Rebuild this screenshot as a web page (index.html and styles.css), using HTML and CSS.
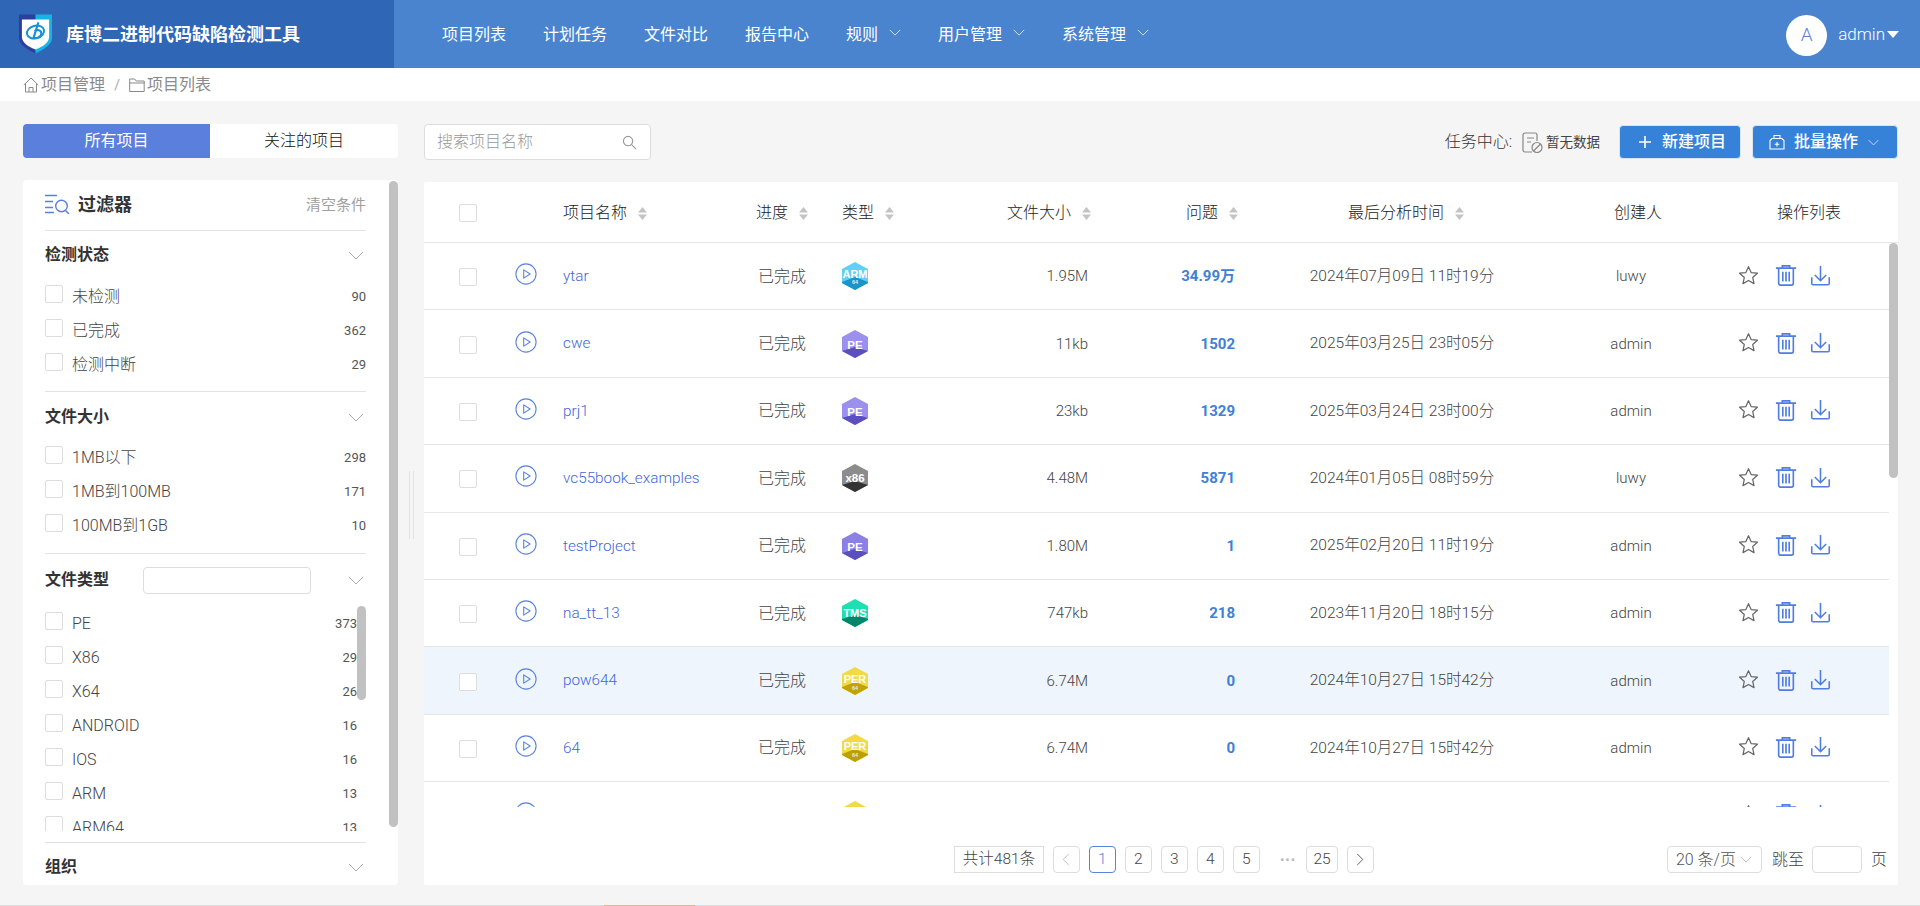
FILE: index.html
```html
<!DOCTYPE html>
<html lang="zh-CN">
<head>
<meta charset="utf-8">
<title>库博二进制代码缺陷检测工具</title>
<link rel="stylesheet" href="styles.css">
</head>
<body>
<svg class="defs" width="0" height="0" aria-hidden="true">
  <symbol id="i-chev" viewBox="0 0 16 9"><path d="M1 1l7 7 7-7" fill="none" stroke="currentColor" stroke-width="1"/></symbol>
  <symbol id="i-play" viewBox="0 0 24 24"><circle cx="12" cy="12" r="11" fill="none" stroke="currentColor" stroke-width="1.2"/><path d="M9.500 7.500v9l7-4.500z" fill="none" stroke="currentColor" stroke-width="1.2" stroke-linejoin="round"/></symbol>
  <symbol id="i-star" viewBox="0 0 24 24"><path d="M12 2l3 6.600 7.200.8-5.400 4.800 1.500 7.100L12 17.700 5.700 21.300l1.500-7.100L1.800 9.400 9 8.600z" fill="none" stroke="currentColor" stroke-width="1.400" stroke-linejoin="round"/></symbol>
  <symbol id="i-trash" viewBox="0 0 24 24"><path d="M1 4.500h22M8 4.500V2h8v2.500M4 4.500V21a2 2 0 0 0 2 2h12a2 2 0 0 0 2-2V4.500M8.500 8.500v10.500M12 8.500v10.500M15.500 8.500v10.500" fill="none" stroke="currentColor" stroke-width="1.800"/></symbol>
  <symbol id="i-down" viewBox="0 0 24 24"><path d="M12 1v17M5.500 11.500l6.500 6.500 6.500-6.500M2 14v7a1.500 1.500 0 0 0 1.500 1.500h17A1.500 1.500 0 0 0 22 21v-7" fill="none" stroke="currentColor" stroke-width="1.800"/></symbol>
  <symbol id="i-sort" viewBox="0 0 9 13"><path d="M4.500 0L9 5.500H0zM4.500 13L0 7.500h9z" fill="currentColor"/></symbol>
</svg>

<header class="topbar">
  <div class="brand">
    <svg class="logo" viewBox="0 0 36 40" aria-hidden="true">
      <path d="M1 0h17v40C10 36 1 31 1 24z" fill="#2a3f9e"/>
      <path d="M18 0h17v24c0 7-9 12-17 16z" fill="#16b4e6"/>
      <path d="M4 5h28v18c0 6-7 10-14 13C11 33 4 29 4 23z" fill="#fff"/>
      <ellipse cx="18" cy="18" rx="9" ry="6.500" fill="none" stroke="#1593d6" stroke-width="2" transform="rotate(-15 18 18)"/>
      <path d="M21 8l-5 16c3 1 8-1 8-4.500s-4-4.500-7-2.500" fill="none" stroke="#1593d6" stroke-width="2.200"/>
    </svg>
    <span class="brand-name">库博二进制代码缺陷检测工具</span>
  </div>
  <nav class="nav">
    <a class="nav-item">项目列表</a>
    <a class="nav-item">计划任务</a>
    <a class="nav-item">文件对比</a>
    <a class="nav-item">报告中心</a>
    <a class="nav-item">规则<svg class="nav-chev"><use href="#i-chev"/></svg></a>
    <a class="nav-item">用户管理<svg class="nav-chev"><use href="#i-chev"/></svg></a>
    <a class="nav-item">系统管理<svg class="nav-chev"><use href="#i-chev"/></svg></a>
  </nav>
  <div class="user">
    <span class="avatar">A</span>
    <span class="user-name">admin</span>
    <span class="user-caret"></span>
  </div>
</header>

<div class="crumbs">
  <svg class="crumb-icon" viewBox="0 0 16 16" aria-hidden="true"><path d="M.8 8L8 1l7.200 7M2.500 7v8h11V7M6 15v-4.500h4V15" fill="none" stroke="currentColor" stroke-width="1"/></svg>
  <span>项目管理</span>
  <span class="crumb-sep">/</span>
  <svg class="crumb-icon" viewBox="0 0 16 16" aria-hidden="true"><path d="M.7 14.500V2h5l1.500 2h8v10.500zM.7 6h14.600" fill="none" stroke="currentColor" stroke-width="1"/></svg>
  <span>项目列表</span>
</div>

<main class="main">
  <aside class="side">
    <div class="tabs">
      <div class="tab tab-on">所有项目</div>
      <div class="tab">关注的项目</div>
    </div>
    <div class="panel">
      <div class="panel-head">
        <svg class="filter-icon" viewBox="0 0 25 20" aria-hidden="true"><path d="M0 1.500h12M0 7.500h8M0 13.500h8M0 18.500h9" fill="none" stroke="#5b7fdd" stroke-width="1.400"/><circle cx="16.500" cy="12" r="5.800" fill="none" stroke="#5b7fdd" stroke-width="1.400"/><path d="M20.500 16.500l3.500 3.500" stroke="#5b7fdd" stroke-width="1.400"/></svg>
        <span class="panel-title">过滤器</span>
        <span class="panel-clear">清空条件</span>
      </div>

      <section class="fsec">
        <div class="fsec-title"><b>检测状态</b><svg class="fchev"><use href="#i-chev"/></svg></div>
        <div class="fitem"><i class="ck"></i><span class="fname">未检测</span><span class="fnum">90</span></div>
        <div class="fitem"><i class="ck"></i><span class="fname">已完成</span><span class="fnum">362</span></div>
        <div class="fitem"><i class="ck"></i><span class="fname">检测中断</span><span class="fnum">29</span></div>
      </section>

      <section class="fsec fsec-size">
        <div class="fsec-title"><b>文件大小</b><svg class="fchev"><use href="#i-chev"/></svg></div>
        <div class="fitem"><i class="ck"></i><span class="fname">1MB以下</span><span class="fnum">298</span></div>
        <div class="fitem"><i class="ck"></i><span class="fname">1MB到100MB</span><span class="fnum">171</span></div>
        <div class="fitem"><i class="ck"></i><span class="fname">100MB到1GB</span><span class="fnum">10</span></div>
      </section>

      <section class="fsec fsec-types">
        <div class="fsec-title fsec-title-tall"><b>文件类型</b><span class="ftype-input"></span><svg class="fchev"><use href="#i-chev"/></svg></div>
        <div class="flist">
          <div class="fitem"><i class="ck"></i><span class="fname">PE</span><span class="fnum">373</span></div>
          <div class="fitem"><i class="ck"></i><span class="fname">X86</span><span class="fnum">29</span></div>
          <div class="fitem"><i class="ck"></i><span class="fname">X64</span><span class="fnum">26</span></div>
          <div class="fitem"><i class="ck"></i><span class="fname">ANDROID</span><span class="fnum">16</span></div>
          <div class="fitem"><i class="ck"></i><span class="fname">IOS</span><span class="fnum">16</span></div>
          <div class="fitem"><i class="ck"></i><span class="fname">ARM</span><span class="fnum">13</span></div>
          <div class="fitem"><i class="ck"></i><span class="fname">ARM64</span><span class="fnum">13</span></div>
          <span class="flist-bar"></span>
        </div>
      </section>

      <section class="fsec fsec-last">
        <div class="fsec-title"><b>组织</b><svg class="fchev"><use href="#i-chev"/></svg></div>
      </section>
      <span class="panel-bar"></span>
    </div>
  </aside>

  <div class="gutter"><span class="handle"></span></div>

  <div class="content">
    <div class="toolbar">
      <div class="search">
        <span class="search-text">搜索项目名称</span>
        <svg class="search-icon" viewBox="0 0 16 16" aria-hidden="true"><circle cx="6.500" cy="6.500" r="5" fill="none" stroke="currentColor" stroke-width="1.200"/><path d="M10.500 10.500l4.500 4.500" stroke="currentColor" stroke-width="1.200"/></svg>
      </div>
      <div class="actions">
        <span class="task-label">任务中心:</span>
        <svg class="task-icon" viewBox="0 0 21 21" aria-hidden="true"><path d="M10 20H3a2 2 0 0 1-2-2V3a2 2 0 0 1 2-2h10a2 2 0 0 1 2 2v6M5 6h7M5 10h4" fill="none" stroke="#888" stroke-width="1.200"/><circle cx="15" cy="15.500" r="5" fill="none" stroke="#888" stroke-width="1.200"/><path d="M11.500 19l7-7" stroke="#888" stroke-width="1.200"/></svg>
        <span class="task-empty">暂无数据</span>
        <button class="btn btn-new"><svg class="btn-plus" viewBox="0 0 12 12" aria-hidden="true"><path d="M6 0v12M0 6h12" stroke="currentColor" stroke-width="1.600"/></svg>新建项目</button>
        <button class="btn btn-batch"><svg class="btn-box" viewBox="0 0 16 16" aria-hidden="true"><path d="M1 15V6.500L3 4.500h10l2 2V15zM5 4.500V1.500h6v3M8 8v4.500M5.700 10.200h4.600" fill="none" stroke="currentColor" stroke-width="1.100"/></svg>批量操作<svg class="btn-chev"><use href="#i-chev"/></svg></button>
      </div>
    </div>

    <div class="card">
      <div class="grid thead">
        <div class="c-ck"><i class="ck"></i></div>
        <div></div>
        <div class="th">项目名称<svg class="sort"><use href="#i-sort"/></svg></div>
        <div class="th">进度<svg class="sort"><use href="#i-sort"/></svg></div>
        <div class="th">类型<svg class="sort"><use href="#i-sort"/></svg></div>
        <div class="th th-end">文件大小<svg class="sort"><use href="#i-sort"/></svg></div>
        <div class="th th-end">问题<svg class="sort"><use href="#i-sort"/></svg></div>
        <div class="th th-time">最后分析时间<svg class="sort"><use href="#i-sort"/></svg></div>
        <div class="th th-center">创建人</div>
        <div class="th th-ops">操作列表</div>
      </div>

      <div class="tbody">
        <div class="grid row">
          <div class="c-ck"><i class="ck"></i></div>
          <svg class="play"><use href="#i-play"/></svg>
          <a class="name">ytar</a>
          <span class="state">已完成</span>
          <svg class="hex" viewBox="0 0 26 28"><polygon points="13,0 26,7 26,21 13,28 0,21 0,7" fill="#5fd0f6"/><polygon points="0,20 13,15 26,20 26,21 13,28 0,21" fill="#1a94c9"/><text class="hex-t hex-long" x="13" y="15.500">ARM</text><text class="hex-s" x="13" y="21.500">64</text></svg>
          <span class="size">1.95M</span>
          <span class="issue">34.99万</span>
          <span class="time">2024年07月09日 11时19分</span>
          <span class="owner">luwy</span>
          <div class="ops"><svg class="op op-star"><use href="#i-star"/></svg><svg class="op op-trash"><use href="#i-trash"/></svg><svg class="op op-down"><use href="#i-down"/></svg></div>
        </div>
        <div class="grid row">
          <div class="c-ck"><i class="ck"></i></div>
          <svg class="play"><use href="#i-play"/></svg>
          <a class="name">cwe</a>
          <span class="state">已完成</span>
          <svg class="hex" viewBox="0 0 26 28"><polygon points="13,0 26,7 26,21 13,28 0,21 0,7" fill="#9c90ee"/><polygon points="0,21 13,17 26,21 13,28" fill="#5a4ec0"/><text class="hex-t" x="13" y="18.500">PE</text></svg>
          <span class="size">11kb</span>
          <span class="issue">1502</span>
          <span class="time">2025年03月25日 23时05分</span>
          <span class="owner">admin</span>
          <div class="ops"><svg class="op op-star"><use href="#i-star"/></svg><svg class="op op-trash"><use href="#i-trash"/></svg><svg class="op op-down"><use href="#i-down"/></svg></div>
        </div>
        <div class="grid row">
          <div class="c-ck"><i class="ck"></i></div>
          <svg class="play"><use href="#i-play"/></svg>
          <a class="name">prj1</a>
          <span class="state">已完成</span>
          <svg class="hex" viewBox="0 0 26 28"><polygon points="13,0 26,7 26,21 13,28 0,21 0,7" fill="#9c90ee"/><polygon points="0,21 13,17 26,21 13,28" fill="#5a4ec0"/><text class="hex-t" x="13" y="18.500">PE</text></svg>
          <span class="size">23kb</span>
          <span class="issue">1329</span>
          <span class="time">2025年03月24日 23时00分</span>
          <span class="owner">admin</span>
          <div class="ops"><svg class="op op-star"><use href="#i-star"/></svg><svg class="op op-trash"><use href="#i-trash"/></svg><svg class="op op-down"><use href="#i-down"/></svg></div>
        </div>
        <div class="grid row">
          <div class="c-ck"><i class="ck"></i></div>
          <svg class="play"><use href="#i-play"/></svg>
          <a class="name">vc55book_examples</a>
          <span class="state">已完成</span>
          <svg class="hex" viewBox="0 0 26 28"><polygon points="13,0 26,7 26,21 13,28 0,21 0,7" fill="#8c8c8c"/><polygon points="0,21 13,17 26,21 13,28" fill="#333"/><text class="hex-t" x="13" y="18">x86</text></svg>
          <span class="size">4.48M</span>
          <span class="issue">5871</span>
          <span class="time">2024年01月05日 08时59分</span>
          <span class="owner">luwy</span>
          <div class="ops"><svg class="op op-star"><use href="#i-star"/></svg><svg class="op op-trash"><use href="#i-trash"/></svg><svg class="op op-down"><use href="#i-down"/></svg></div>
        </div>
        <div class="grid row">
          <div class="c-ck"><i class="ck"></i></div>
          <svg class="play"><use href="#i-play"/></svg>
          <a class="name">testProject</a>
          <span class="state">已完成</span>
          <svg class="hex" viewBox="0 0 26 28"><polygon points="13,0 26,7 26,21 13,28 0,21 0,7" fill="#8a80e6"/><polygon points="0,21 13,17 26,21 13,28" fill="#5a4ec0"/><text class="hex-t" x="13" y="18.500">PE</text></svg>
          <span class="size">1.80M</span>
          <span class="issue">1</span>
          <span class="time">2025年02月20日 11时19分</span>
          <span class="owner">admin</span>
          <div class="ops"><svg class="op op-star"><use href="#i-star"/></svg><svg class="op op-trash"><use href="#i-trash"/></svg><svg class="op op-down"><use href="#i-down"/></svg></div>
        </div>
        <div class="grid row">
          <div class="c-ck"><i class="ck"></i></div>
          <svg class="play"><use href="#i-play"/></svg>
          <a class="name">na_tt_13</a>
          <span class="state">已完成</span>
          <svg class="hex" viewBox="0 0 26 28"><polygon points="13,0 26,7 26,21 13,28 0,21 0,7" fill="#1de0b2"/><polygon points="0,20 13,16 26,20 26,21 13,28 0,21" fill="#00856a"/><text class="hex-t hex-long" x="13" y="18">TMS</text></svg>
          <span class="size">747kb</span>
          <span class="issue">218</span>
          <span class="time">2023年11月20日 18时15分</span>
          <span class="owner">admin</span>
          <div class="ops"><svg class="op op-star"><use href="#i-star"/></svg><svg class="op op-trash"><use href="#i-trash"/></svg><svg class="op op-down"><use href="#i-down"/></svg></div>
        </div>
        <div class="grid row row-hover">
          <div class="c-ck"><i class="ck"></i></div>
          <svg class="play"><use href="#i-play"/></svg>
          <a class="name">pow644</a>
          <span class="state">已完成</span>
          <svg class="hex" viewBox="0 0 26 28"><polygon points="13,0 26,7 26,21 13,28 0,21 0,7" fill="#f0da48"/><polygon points="0,20 13,15 26,20 26,21 13,28 0,21" fill="#c2a400"/><text class="hex-t hex-long" x="13" y="16">PER</text><text class="hex-s" x="13" y="22.500">64</text></svg>
          <span class="size">6.74M</span>
          <span class="issue">0</span>
          <span class="time">2024年10月27日 15时42分</span>
          <span class="owner">admin</span>
          <div class="ops"><svg class="op op-star"><use href="#i-star"/></svg><svg class="op op-trash"><use href="#i-trash"/></svg><svg class="op op-down"><use href="#i-down"/></svg></div>
        </div>
        <div class="grid row">
          <div class="c-ck"><i class="ck"></i></div>
          <svg class="play"><use href="#i-play"/></svg>
          <a class="name">64</a>
          <span class="state">已完成</span>
          <svg class="hex" viewBox="0 0 26 28"><polygon points="13,0 26,7 26,21 13,28 0,21 0,7" fill="#f0da48"/><polygon points="0,20 13,15 26,20 26,21 13,28 0,21" fill="#bda000"/><text class="hex-t hex-long" x="13" y="16">PER</text><text class="hex-s" x="13" y="22.500">64</text></svg>
          <span class="size">6.74M</span>
          <span class="issue">0</span>
          <span class="time">2024年10月27日 15时42分</span>
          <span class="owner">admin</span>
          <div class="ops"><svg class="op op-star"><use href="#i-star"/></svg><svg class="op op-trash"><use href="#i-trash"/></svg><svg class="op op-down"><use href="#i-down"/></svg></div>
        </div>
        <div class="grid row">
          <div class="c-ck"><i class="ck"></i></div>
          <svg class="play"><use href="#i-play"/></svg>
          <span></span>
          <span></span>
          <svg class="hex" viewBox="0 0 26 28"><polygon points="13,0 26,7 26,21 13,28 0,21 0,7" fill="#f0da48"/></svg>
          <span></span>
          <span></span>
          <span></span>
          <span></span>
          <div class="ops"><svg class="op op-star"><use href="#i-star"/></svg><svg class="op op-trash"><use href="#i-trash"/></svg><svg class="op op-down"><use href="#i-down"/></svg></div>
        </div>
        <span class="tbody-bar"></span>
      </div>

      <div class="pager">
        <span class="pg-total">共计481条</span>
        <span class="pg pg-arrow"><svg class="pg-left" viewBox="0 0 8 14"><path d="M7 1L1 7l6 6" fill="none" stroke="currentColor" stroke-width="1"/></svg></span>
        <span class="pg pg-on">1</span>
        <span class="pg">2</span>
        <span class="pg">3</span>
        <span class="pg">4</span>
        <span class="pg">5</span>
        <span class="pg-dots">•••</span>
        <span class="pg pg-wide">25</span>
        <span class="pg pg-arrow pg-next"><svg class="pg-right" viewBox="0 0 8 14"><path d="M1 1l6 6-6 6" fill="none" stroke="currentColor" stroke-width="1"/></svg></span>
        <span class="pg-size">20 条/页<svg class="pg-chev"><use href="#i-chev"/></svg></span>
        <span class="pg-jump">跳至</span>
        <span class="pg-input"></span>
        <span class="pg-unit">页</span>
      </div>
    </div>
  </div>
</main>
<div class="strip"><span class="strip-mark"></span></div>
</body>
</html>
```

FILE: styles.css
```css
* { box-sizing: border-box; }
html, body { margin: 0; padding: 0; }
body {
  height: 906px;
  overflow: hidden;
  display: flex;
  flex-direction: column;
  background: #f5f5f5;
  color: #444;
  font: 300 16px/1.2 Roboto, "Noto Sans CJK SC", sans-serif;
}
.defs { position: absolute; }
svg { display: block; flex: none; }
i { display: block; font-style: normal; }

/* top bar */
.topbar { height: 68px; flex: none; display: flex; align-items: center; background: #4a84cf; color: #fff; }
.brand { width: 394px; height: 68px; flex: none; display: flex; align-items: center; padding-left: 18px; background: #2f66b5; }
.logo { width: 35px; height: 40px; margin-right: 13px; }
.brand-name { font-size: 18px; font-weight: 700; padding-top: 2px; }
.nav { display: flex; align-items: center; gap: 37px; padding-left: 48px; padding-top: 2px; }
.nav-item { display: flex; align-items: center; color: #fff; font-weight: 400; }
.nav-chev { width: 12px; height: 7px; margin-left: 11px; margin-bottom: 5px; color: #fff; }
.user { margin-left: auto; display: flex; align-items: center; padding-right: 21px; }
.avatar { width: 41px; height: 41px; margin-top: 3px; border-radius: 50%; background: #fff; color: #5b7fdd; font-size: 19px; display: flex; align-items: center; justify-content: center; margin-right: 11px; }
.user-name { font-size: 17px; }
.user-caret { width: 0; height: 0; margin-left: 2px; border-left: 6.500px solid transparent; border-right: 6.500px solid transparent; border-top: 7px solid #fff; }

/* breadcrumb */
.crumbs { height: 33px; flex: none; display: flex; align-items: center; padding: 1px 0 0 23px; background: #fff; color: #8a8a8a; font-weight: 400; }
.crumb-icon { width: 16px; height: 16px; margin-right: 2px; color: #888; }
.crumb-sep { width: 24px; text-align: center; font-size: 14px; color: #aaa; }

/* main layout */
.main { height: 804px; flex: none; display: flex; padding: 23px 0 20px 23px; }
.side { width: 375px; flex: none; display: flex; flex-direction: column; }
.gutter { width: 26px; flex: none; display: flex; align-items: center; justify-content: center; }
.handle { width: 5px; height: 68px; margin-left: 1px; border-left: 1px solid #e2e2e2; border-right: 1px solid #e2e2e2; }
.content { width: 1474px; flex: none; display: flex; flex-direction: column; }

/* tabs */
.tabs { height: 34px; flex: none; display: flex; margin-bottom: 22px; background: #fff; border-radius: 4px; overflow: hidden; }
.tab { flex: 1; display: flex; align-items: center; justify-content: center; color: #111; }
.tab-on { background: #5b7fdd; color: #fff; flex: none; width: 187px; font-weight: 400; }

/* filter panel */
.panel { position: relative; height: 705px; flex: none; padding-left: 22px; padding-right: 32px; background: #fff; border-radius: 4px; overflow: hidden; }
.panel-head { height: 51px; display: flex; align-items: center; border-bottom: 1px solid #e2e2e2; padding-bottom: 1px; }
.filter-icon { width: 25px; height: 20px; margin-right: 8px; margin-bottom: 2px; }
.panel-title { font-size: 18px; font-weight: 700; color: #333; }
.panel-clear { margin-left: auto; font-size: 15px; color: #a0a0a0; font-weight: 400; }
.fsec { border-bottom: 1px solid #e2e2e2; padding-bottom: 10px; }
.fsec-size { padding-bottom: 11px; }
.fsec-size .fsec-title { padding-top: 2px; }
.fsec-types { padding-bottom: 11px; }
.fsec-last { border-bottom: 0; }
.fsec-title { height: 48px; display: flex; align-items: center; }
.fsec-title b { font-weight: 700; color: #333; }
.fsec-title-tall { height: 52px; }
.fchev { width: 16px; height: 9px; margin-left: auto; margin-right: 2px; color: #aaa; }
.ftype-input { width: 168px; height: 27px; margin-left: 34px; background: #fff; border: 1px solid #ddd; border-radius: 4px; }
.fitem { height: 34px; display: flex; align-items: center; }
.fname { flex: 1; margin-left: 9px; padding-top: 2px; color: #444; }
.fnum { font-size: 13px; color: #555; padding-top: 2px; font-weight: 400; }
.ck { width: 18px; height: 18px; flex: none; background: #fff; border: 1px solid #ddd; border-radius: 2px; }
.fitem .ck { margin-bottom: 4px; }
.flist { position: relative; height: 225px; padding-right: 9px; overflow: hidden; }
.flist-bar { position: absolute; top: 0; right: 0; width: 9px; height: 94px; border-radius: 5px; background: #c1c1c1; }
.panel-bar { position: absolute; top: 1px; right: 0; width: 9px; height: 646px; border-radius: 5px; background: #c1c1c1; }

/* toolbar */
.toolbar { height: 36px; flex: none; display: flex; align-items: center; margin-bottom: 22px; }
.search { width: 227px; height: 36px; display: flex; align-items: center; justify-content: space-between; padding: 0 12px; background: #fff; border: 1px solid #ddd; border-radius: 4px; }
.search-text { color: #999; }
.search-icon { width: 15px; height: 15px; color: #999; margin-right: 1px; }
.actions { margin-left: auto; display: flex; align-items: center; }
.task-label { color: #333; font-size: 16px; margin-right: 10px; }
.task-icon { width: 21px; height: 21px; margin-right: 3px; }
.task-empty { font-size: 13.500px; color: #444; margin-right: 19px; font-weight: 400; }
.btn { height: 34px; display: flex; align-items: center; padding: 0; background: #3782d9; border: 1px solid #d8e4f2; border-radius: 4px; color: #fff; font: 500 16px/1 Roboto, "Noto Sans CJK SC", sans-serif; }
.btn-new { width: 122px; padding-left: 19px; margin-right: 11px; }
.btn-batch { width: 146px; padding-left: 16px; }
.btn-plus { width: 12px; height: 12px; margin-right: 11px; }
.btn-box { width: 16px; height: 16px; margin-right: 9px; }
.btn-chev { width: 11px; height: 7px; margin-left: 10px; }

/* table */
.card { height: 703px; flex: none; display: flex; flex-direction: column; background: #fff; border-radius: 2px; overflow: hidden; }
.grid { display: grid; grid-template-columns: 91px 48px 193px 86px 148px 101px 147px 328px 144px 1fr; align-items: center; }
.thead { height: 61px; flex: none; border-bottom: 1px solid #e6e6e6; }
.c-ck { padding: 2px 0 0 35px; }
.th { display: flex; align-items: center; color: #222; padding-top: 2px; }
.th-end { justify-content: flex-end; }
.th-time { justify-content: center; padding-left: 8px; }
.th-center { justify-content: center; }
.th-ops { padding-left: 67px; }
.sort { width: 9px; height: 13px; margin-left: 11px; color: #c4c4c4; }
.tbody { position: relative; height: 564px; flex: none; overflow: hidden; }
.row { height: 67.400px; margin-right: 9px; border-bottom: 1px solid #e6e6e6; font-size: 15px; color: #444; }
.row-hover { background: #eef5fd; }
.play { width: 22px; height: 24px; margin-bottom: 4px; color: #5b84e0; }
.name { color: #3f68d8; font-size: 15.300px; }
.state { font-size: 16px; padding-left: 2px; }
.size { text-align: right; padding-right: 3px; }
.issue { text-align: right; padding-right: 3px; font-weight: 700; color: #4080d8; }
.time { text-align: center; font-size: 15.500px; }
.owner { text-align: center; padding-right: 14px; }
.ops { display: flex; align-items: center; padding-left: 28px; margin-bottom: 2px; }
.op { width: 21px; height: 21px; color: #4f7de0; }
.op-star { color: #666; margin-right: 16px; }
.op-trash { width: 22px; height: 22px; margin-right: 13px; }
.tbody-bar { position: absolute; top: 0; right: 0; width: 9px; height: 235px; border-radius: 5px; background: #c1c1c1; }
.hex { width: 26px; height: 28px; }
.hex-t { font: 700 11.500px "Liberation Sans", sans-serif; fill: #fff; text-anchor: middle; }
.hex-long { font-size: 11px; }
.hex-s { font: 700 5.500px "Liberation Sans", sans-serif; fill: #e8e8e8; text-anchor: middle; }

/* pager */
.pager { flex: 1; display: flex; align-items: flex-start; padding: 39px 11px 0 530px; font-size: 15.500px; color: #444; }
.pg-total { width: 90px; height: 27px; display: flex; align-items: center; justify-content: center; border: 1px solid #ddd; margin-right: 9px; }
.pg { width: 26.500px; height: 27px; display: flex; align-items: center; justify-content: center; margin-right: 9.500px; background: #fff; border: 1px solid #ddd; border-radius: 4px; }
.pg-on { border-color: #5b84e0; color: #5b84e0; }
.pg-arrow { color: #bbb; }
.pg-next { color: #555; margin-right: 0; }
.pg-left, .pg-right { width: 8px; height: 13px; }
.pg-dots { width: 20px; height: 27px; margin: 0 8px 0 9px; display: flex; align-items: center; justify-content: center; font-size: 13px; font-weight: 400; color: #bbb; letter-spacing: 1px; white-space: nowrap; }
.pg-wide { width: 32px; margin-right: 9px; }
.pg-size { width: 95px; height: 27px; margin-left: auto; display: flex; align-items: center; padding-left: 8px; border: 1px solid #ddd; border-radius: 4px; color: #555; font-size: 16px; white-space: nowrap; }
.pg-chev { width: 12px; height: 7px; margin-left: 4px; color: #aaa; }
.pg-jump { margin-left: 10px; height: 27px; display: flex; align-items: center; font-size: 16px; }
.pg-input { width: 50px; height: 27px; margin-left: 8px; border: 1px solid #ddd; border-radius: 4px; }
.pg-unit { margin-left: 9px; height: 27px; display: flex; align-items: center; font-size: 16px; }

/* bottom edge */
.strip { height: 1px; flex: none; background: #ddd; }
.strip-mark { display: block; width: 91px; height: 1px; margin-left: 604px; background: #f2b27a; }
```
